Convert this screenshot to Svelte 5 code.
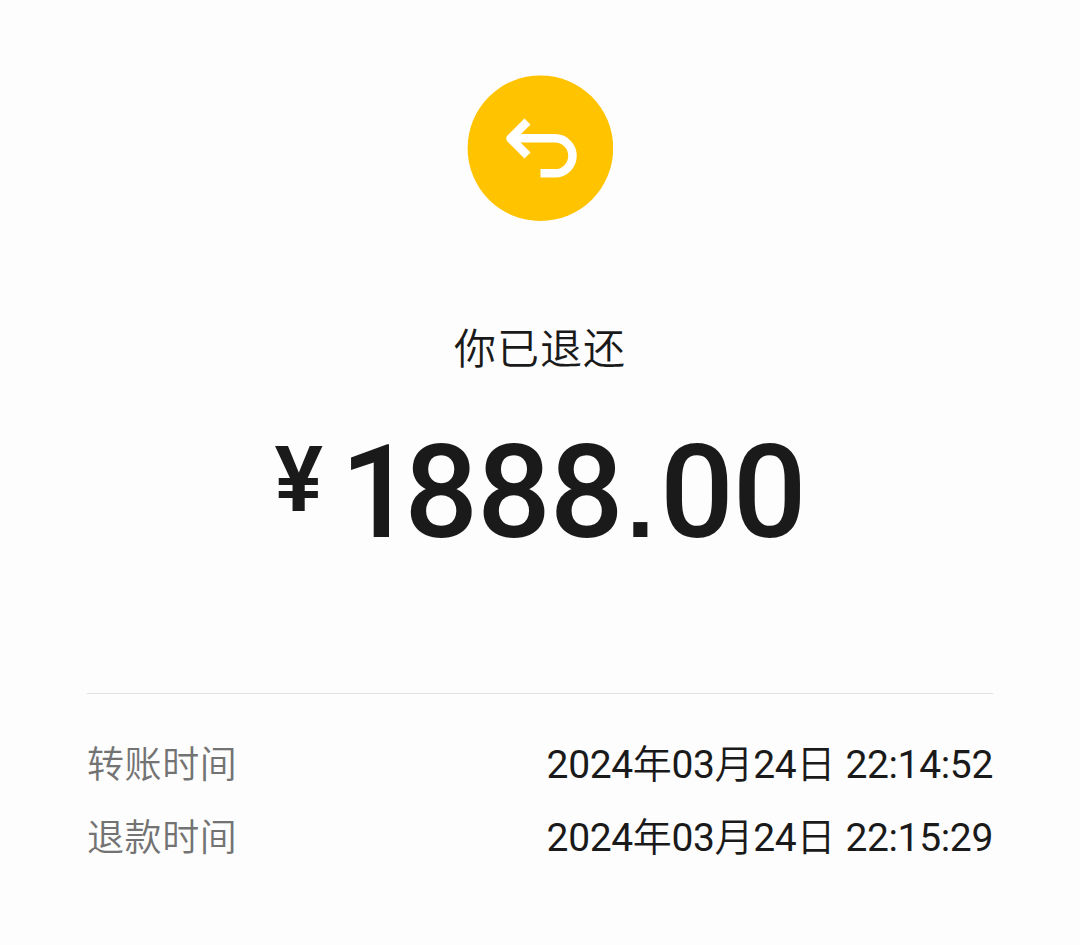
<script>
	const amount = '1888.00';
	const [yuan, cents] = amount.split('.');

	const details = [
		{ label: '转账时间', date: '2024年03月24日', time: '22:14:52' },
		{ label: '退款时间', date: '2024年03月24日', time: '22:15:29' }
	];
</script>

<main class="receipt">
	<div class="status-icon">
		<svg viewBox="0 0 146 146" aria-hidden="true">
			<circle cx="73.4" cy="73.2" r="72.8" />
			<path d="M60.5 46.5 L43.5 63.5 L60.5 80.5" stroke-linejoin="round" />
			<path d="M45 63.3 H88 A17.5 17.5 0 0 1 88 98.3 H73.5" />
		</svg>
	</div>

	<h1>你已退还</h1>

	<div class="amount">
		<span class="currency">¥</span>
		<span class="value">{yuan}<span class="point">.</span>{cents}</span>
	</div>

	<dl>
		{#each details as item}
			<div class="row">
				<dt>{item.label}</dt>
				<dd>{item.date} {item.time}</dd>
			</div>
		{/each}
	</dl>
</main>

<style>
	:global(body) {
		margin: 0;
		background: #fdfdfd;
	}

	.receipt {
		box-sizing: border-box;
		height: 945px;
		padding: 75px 87px 0;
		display: flex;
		flex-direction: column;
		align-items: center;
		color: #1a1a1a;
		font-family: Roboto, 'Noto Sans CJK SC', sans-serif;
		overflow: hidden;
	}

	.status-icon {
		width: 146px;
		height: 146px;
	}

	svg {
		display: block;
		width: 100%;
		height: 100%;
	}

	circle {
		fill: #ffc300;
	}

	path {
		fill: none;
		stroke: #fff;
		stroke-width: 8.5;
	}

	h1 {
		margin: 99px 0 0;
		font-size: 42px;
		font-weight: 350;
		line-height: 60px;
		letter-spacing: 1px;
	}

	.amount {
		display: flex;
		align-items: flex-start;
		height: 150px;
		margin-top: 35px;
		font-weight: 600;
	}

	.currency {
		margin-right: 17px;
		font-size: 91px;
		line-height: 130px;
	}

	.value {
		font-size: 130px;
		font-weight: 500;
		line-height: 156px;
		letter-spacing: -1.2px;
	}

	.value::first-letter {
		margin-right: -8.5px;
	}

	.point {
		font-family: 'Liberation Sans', sans-serif;
		font-size: 100px;
		font-weight: 700;
		line-height: 1;
		margin: 0 7px 0 4px;
	}

	dl {
		align-self: stretch;
		margin: 128px 0 0;
		padding-top: 35px;
		border-top: 1px solid #e1e1e1;
	}

	.row {
		display: flex;
		justify-content: space-between;
		height: 73px;
		line-height: 73px;
	}

	dt {
		color: #737373;
		font-size: 37px;
		font-weight: 350;
		letter-spacing: 0.6px;
	}

	dd {
		margin: 0;
		font-family: Roboto, 'Noto Sans CJK SC DemiLight', 'Noto Sans CJK SC', sans-serif;
		font-size: 39px;
		font-weight: 400;
		letter-spacing: -0.35px;
		word-spacing: 1px;
	}
</style>
